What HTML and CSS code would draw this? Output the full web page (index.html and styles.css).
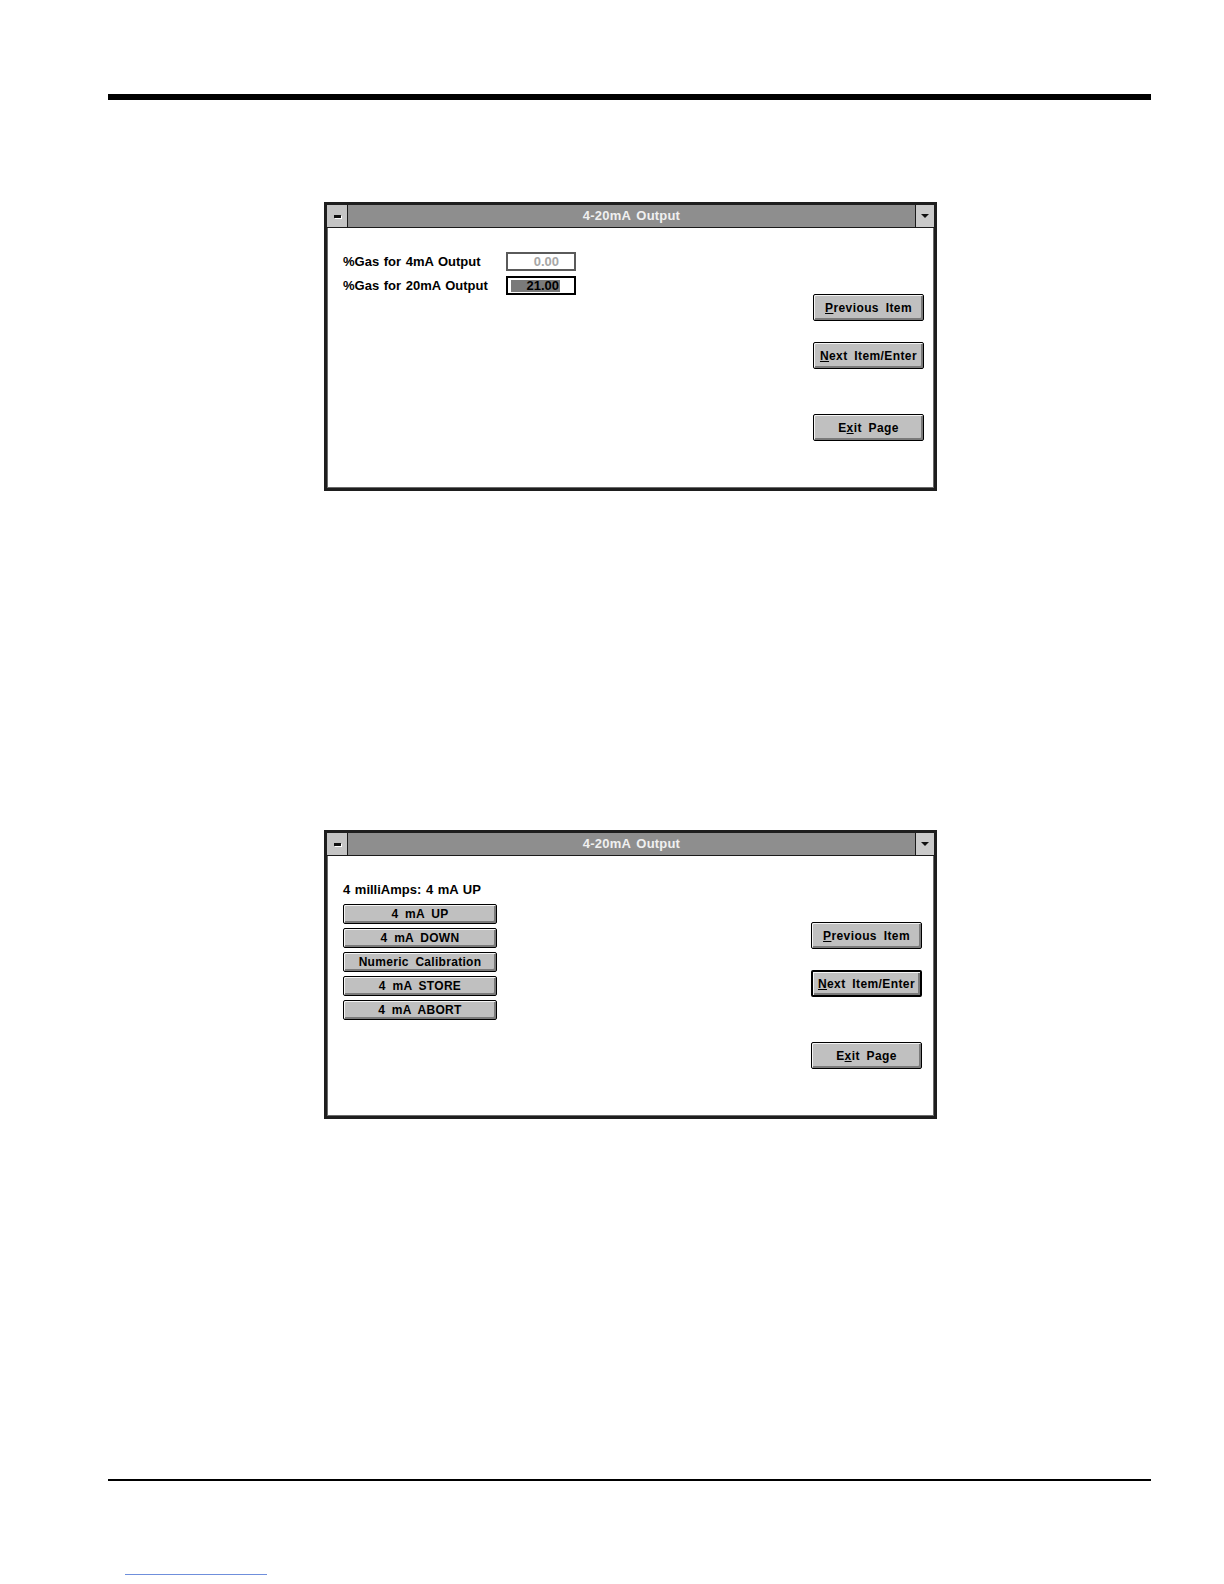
FILE: index.html
```html
<!DOCTYPE html>
<html>
<head>
<meta charset="utf-8">
<link rel="stylesheet" href="styles.css">
</head>
<body>
<div class="page">
  <div class="rule-top"></div>

  <div class="win win-first">
    <div class="titlebar">
      <div class="sysbtn"><span class="dash"></span></div>
      <div class="title">4-20mA Output</div>
      <div class="dropbtn"><span class="tri"></span></div>
    </div>
    <div class="content">
      <div class="left">
        <div class="field">
          <span class="label">%Gas for 4mA Output</span>
          <span class="box box-dim"><span class="val">0.00</span></span>
        </div>
        <div class="field">
          <span class="label">%Gas for 20mA Output</span>
          <span class="box box-active"><span class="val sel">21.00</span></span>
        </div>
      </div>
      <div class="right">
        <div class="btn"><u>P</u>revious Item</div>
        <div class="btn"><u>N</u>ext Item/Enter</div>
        <div class="btn btn-exit">E<u>x</u>it Page</div>
      </div>
    </div>
  </div>

  <div class="win win-second">
    <div class="titlebar">
      <div class="sysbtn"><span class="dash"></span></div>
      <div class="title">4-20mA Output</div>
      <div class="dropbtn"><span class="tri"></span></div>
    </div>
    <div class="content">
      <div class="left">
        <div class="status">4 milliAmps: 4 mA UP</div>
        <div class="list">
          <div class="sbtn">4 mA UP</div>
          <div class="sbtn">4 mA DOWN</div>
          <div class="sbtn">Numeric Calibration</div>
          <div class="sbtn">4 mA STORE</div>
          <div class="sbtn">4 mA ABORT</div>
        </div>
      </div>
      <div class="right right-shift">
        <div class="btn"><u>P</u>revious Item</div>
        <div class="btn btn-default"><u>N</u>ext Item/Enter</div>
        <div class="btn btn-exit">E<u>x</u>it Page</div>
      </div>
    </div>
  </div>

  <div class="rule-bottom"></div>
  <div class="link-line"></div>
</div>
</body>
</html>
```

FILE: styles.css
```css
html, body {
  margin: 0;
  padding: 0;
  background: #ffffff;
}

body {
  font-family: "Liberation Sans", Arial, sans-serif;
  color: #000;
}

.page {
  width: 1224px;
  height: 1584px;
  overflow: hidden;
  padding-top: 94px;
  box-sizing: border-box;
}

.rule-top {
  margin-left: 108px;
  width: 1043px;
  height: 6px;
  background: #000;
}

.win {
  width: 613px;
  height: 289px;
  box-sizing: border-box;
  margin-left: 324px;
  border: 3px solid #1e1e1e;
  box-shadow: inset 0 0 0 1px #6a6a6a;
  background: #fff;
  display: flex;
  flex-direction: column;
}

.win-first {
  margin-top: 102px;
}

.win-second {
  margin-top: 339px;
}

.titlebar {
  height: 23px;
  flex: none;
  display: flex;
  align-items: stretch;
  background: #8e8e8e;
  border-bottom: 1px solid #1a1a1a;
  box-sizing: border-box;
}

.sysbtn {
  width: 20px;
  background: #c4c4c4;
  border-right: 1px solid #1a1a1a;
  display: flex;
  align-items: center;
  justify-content: center;
  flex: none;
}

.dash {
  width: 7px;
  height: 3px;
  background: #111;
  box-shadow: 1px 1px 0 #fff;
}

.title {
  flex: 1;
  text-align: center;
  color: #f0f0f0;
  font-size: 13px;
  font-weight: bold;
  line-height: 22px;
  letter-spacing: 0.2px;
  word-spacing: 2px;
}

.dropbtn {
  width: 18px;
  background: #cacaca;
  border-left: 1px solid #1a1a1a;
  display: flex;
  align-items: center;
  justify-content: center;
  flex: none;
}

.tri {
  width: 0;
  height: 0;
  border-left: 4px solid transparent;
  border-right: 4px solid transparent;
  border-top: 4px solid #111;
}

.content {
  flex: 1;
  display: flex;
  padding: 24px 10px 0 16px;
}

.left {
  display: flex;
  flex-direction: column;
}

.field {
  display: flex;
  align-items: center;
  height: 19px;
  margin-bottom: 5px;
}

.label,
.status {
  font-size: 13px;
  font-weight: bold;
  word-spacing: 1px;
  letter-spacing: 0;
  line-height: 19px;
}

.label {
  width: 163px;
  flex: none;
}

.box {
  width: 70px;
  height: 19px;
  box-sizing: border-box;
  display: flex;
  align-items: center;
  padding-left: 3px;
  font-size: 13px;
  font-weight: bold;
}

.box-dim {
  border: 2px solid #5a5a5a;
  color: #a6a6a6;
}

.box-active {
  border: 2px solid #000;
  color: #000;
}

.val {
  width: 49px;
  text-align: right;
  line-height: 12px;
  padding-right: 1px;
  box-sizing: border-box;
}

.sel {
  background: #7a7a7a;
}

.right {
  margin-left: auto;
  display: flex;
  flex-direction: column;
  padding-top: 42px;
}

.right-shift {
  margin-right: 2px;
}

.btn {
  width: 111px;
  height: 27px;
  box-sizing: border-box;
  background: #c0c0c0;
  border: 1px solid #000;
  border-radius: 2px;
  box-shadow: inset 1px 1px 0 #f4f4f4, inset -2px -2px 0 #7a7a7a;
  font-size: 12px;
  font-weight: bold;
  word-spacing: 3px;
  letter-spacing: 0.4px;
  display: flex;
  align-items: center;
  justify-content: center;
  margin-bottom: 21px;
}

.btn-exit {
  margin-top: 24px;
}

.btn-default {
  border: 2px solid #000;
}

.status {
  margin-bottom: 5px;
}

.list {
  display: flex;
  flex-direction: column;
  gap: 4px;
}

.sbtn {
  width: 154px;
  height: 20px;
  box-sizing: border-box;
  background: #c0c0c0;
  border: 1px solid #000;
  border-radius: 2px;
  box-shadow: inset 1px 1px 0 #f4f4f4, inset -2px -2px 0 #7a7a7a;
  font-size: 12px;
  font-weight: bold;
  word-spacing: 3px;
  letter-spacing: 0.3px;
  display: flex;
  align-items: center;
  justify-content: center;
}

.rule-bottom {
  margin-top: 360px;
  margin-left: 108px;
  width: 1043px;
  height: 2px;
  background: #000;
}

.link-line {
  margin-top: 93px;
  margin-left: 125px;
  width: 142px;
  height: 1px;
  background: #6f8fdc;
}
```
